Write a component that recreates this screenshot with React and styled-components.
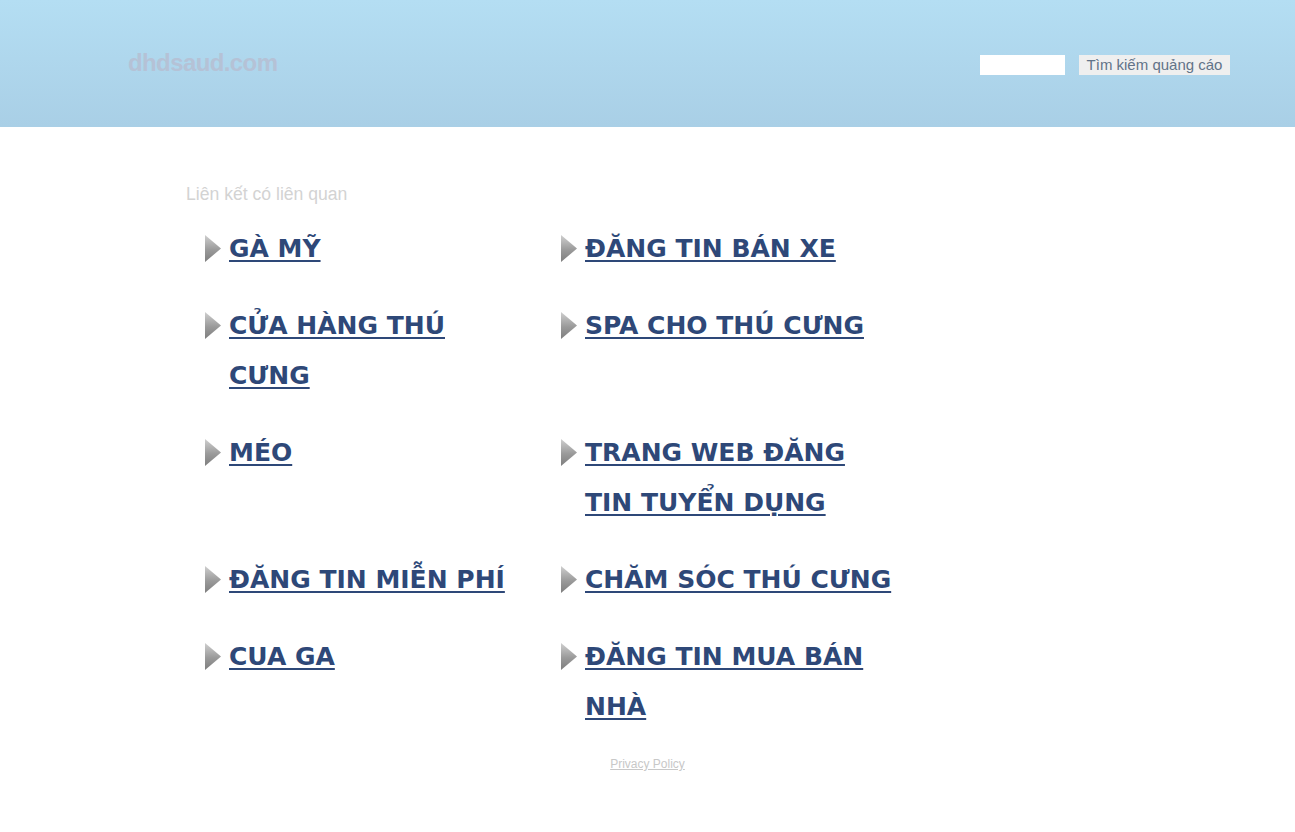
import React from "react";
import styled, { createGlobalStyle } from "styled-components";

const GlobalStyle = createGlobalStyle`
  body {
    margin: 0;
    background: #fff;
    font-family: "Liberation Sans", Arial, sans-serif;
  }
`;

const Header = styled.header`
  height: 127px;
  background: linear-gradient(to bottom, #b4def3 0%, #a9cfe6 100%);
  display: flex;
  align-items: flex-start;
  justify-content: space-between;
  padding: 0 65px 0 128px;
`;

const Logo = styled.div`
  margin-top: 49px;
  font-size: 24px;
  font-weight: bold;
  letter-spacing: -0.6px;
  color: #b5c2d6;
`;

const Search = styled.form`
  margin-top: 55px;
  display: flex;
  gap: 14px;
`;

const SearchInput = styled.input`
  width: 85px;
  height: 20px;
  box-sizing: border-box;
  border: none;
  background: #fff;
  padding: 0 4px;
`;

const SearchButton = styled.button`
  height: 20px;
  width: 151px;
  border: none;
  background: #efefef;
  color: #627388;
  font-family: "Liberation Sans", Arial, sans-serif;
  font-size: 15px;
  line-height: 20px;
  padding: 0;
`;

const Main = styled.main`
  padding: 56px 0 0 186px;
`;

const Caption = styled.div`
  font-size: 17.6px;
  color: #d3d3d3;
  line-height: 22px;
`;

const Grid = styled.ul`
  list-style: none;
  margin: 19px 0 0 19px;
  padding: 0;
  display: grid;
  grid-template-columns: 356px 340px;
  row-gap: 27px;
`;

const Item = styled.li`
  display: flex;
  align-items: flex-start;
  gap: 8px;
`;

const Arrow = styled.span`
  flex: none;
  width: 16px;
  height: 27px;
  margin-top: 11px;
  background: linear-gradient(to bottom, #cfcfcf 0%, #9a9a9a 55%, #7e7e7e 100%);
  clip-path: polygon(0 0, 100% 50%, 0 100%);
`;

const Link = styled.a`
  font-family: "DejaVu Sans", Verdana, sans-serif;
  font-weight: bold;
  font-size: 25px;
  letter-spacing: 0;
  line-height: 50px;
  color: #2e4878;
  text-decoration: underline;
  text-decoration-thickness: 2px;
  text-underline-offset: 3px;
  cursor: pointer;
`;

const Footer = styled.div`
  text-align: center;
  margin-top: 25px;
  font-size: 12px;
  a {
    color: #c8c8c8;
  }
`;

const links = [
  ["GÀ MỸ"],
  ["ĐĂNG TIN BÁN XE"],
  ["CỬA HÀNG THÚ", "CƯNG"],
  ["SPA CHO THÚ CƯNG"],
  ["MÉO"],
  ["TRANG WEB ĐĂNG", "TIN TUYỂN DỤNG"],
  ["ĐĂNG TIN MIỄN PHÍ"],
  ["CHĂM SÓC THÚ CƯNG"],
  ["CUA GA"],
  ["ĐĂNG TIN MUA BÁN", "NHÀ"],
];

export default () => {
  return (
    <>
      <GlobalStyle />
      <Header>
        <Logo>dhdsaud.com</Logo>
        <Search onSubmit={e => e.preventDefault()}>
          <SearchInput type="text" />
          <SearchButton type="submit">Tìm kiếm quảng cáo</SearchButton>
        </Search>
      </Header>
      <Main>
        <Caption>Liên kết có liên quan</Caption>
        <Grid>
          {links.map((lines, i) => (
            <Item key={i}>
              <Arrow />
              <Link>
                {lines.map((l, j) => (
                  <React.Fragment key={j}>
                    {j > 0 && <br />}
                    {l}
                  </React.Fragment>
                ))}
              </Link>
            </Item>
          ))}
        </Grid>
      </Main>
      <Footer>
        <a href="#">Privacy Policy</a>
      </Footer>
    </>
  );
};
